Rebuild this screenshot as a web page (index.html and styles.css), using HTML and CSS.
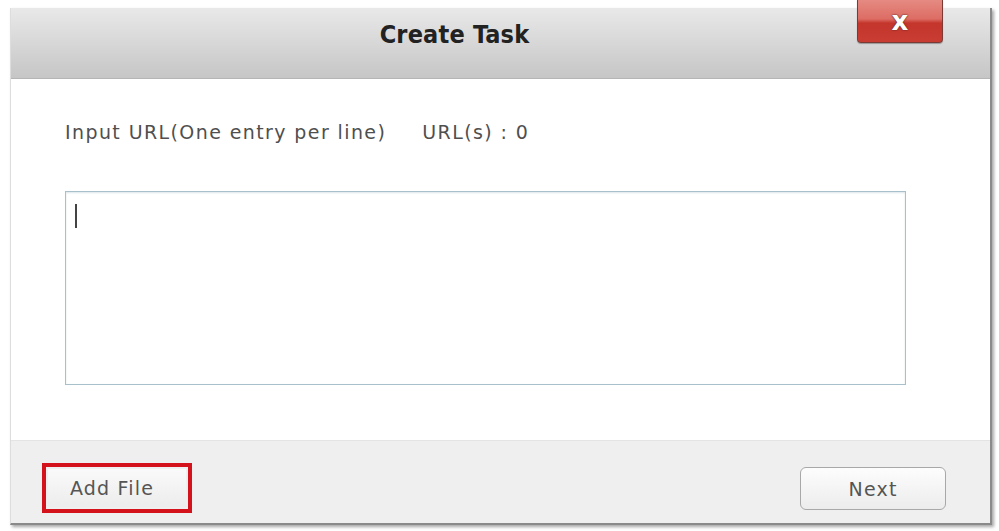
FILE: index.html
```html
<!DOCTYPE html>
<html>
<head>
  <meta charset="UTF-8">
  <title>Create Task</title>
  <link rel="stylesheet" href="styles.css">
</head>
<body>
  <div class="dialog">
    <div class="titlebar">
      <div class="title">Create Task</div>
      <button class="close" title="Close">x</button>
    </div>

    <div class="content">
      <div class="input-label">
        <span>Input URL(One entry per line)</span>
        <span class="count">URL(s) : <span id="urlCount">0</span></span>
      </div>
      <div class="url-box">
        <span class="caret"></span>
      </div>
    </div>

    <div class="footer">
      <div class="highlight">
        <button class="btn add-file">Add File</button>
      </div>
      <button class="btn next">Next</button>
    </div>
  </div>
</body>
</html>
```

FILE: styles.css
```css
body {
  margin: 0;
  background-color: #fff;
  font-family: "DejaVu Sans", Verdana, sans-serif;
  color: #555;
}
.dialog {
  margin: 8px 7px 6px 10px;
  height: 517px;
  display: flex;
  flex-direction: column;
  border-left: 1px solid #ddd;
  border-right: 2px solid #8a8a8a;
  border-bottom: 2px solid #8a8a8a;
  box-shadow: 2px 2px 3px rgba(0,0,0,0.35);
  box-sizing: border-box;
}
.titlebar {
  height: 70px;
  display: flex;
  align-items: flex-start;
  justify-content: center;
  position: relative;
  background: linear-gradient(#e9e9e9, #d4d4d4 60%, #c6c6c6);
  border-bottom: 1px solid #b5b5b5;
}
.title {
  margin-top: 12px;
  margin-left: -92px;
  font-size: 25px;
  font-weight: bold;
  color: #222;
  letter-spacing: 0.2px;
  font-family: "DejaVu Sans Condensed", "DejaVu Sans", sans-serif;
}
.close {
  position: absolute;
  top: -8px;
  right: 47px;
  width: 86px;
  height: 43px;
  padding: 0;
  border: 1px solid #7a3a36;
  border-top: none;
  border-radius: 0 0 4px 4px;
  background: linear-gradient(#e58a82, #dc6d64 45%, #c4352c 55%, #c83d33);
  color: #fff;
  font-size: 26px;
  font-weight: bold;
  line-height: 34px;
  font-family: "DejaVu Sans", sans-serif;
  text-shadow: 0 0 2px #6a2420, 0 0 1px #6a2420;
  box-shadow: 0 1px 1px rgba(0,0,0,0.3);
}
.content {
  flex: 1;
  background-color: #fff;
  padding: 42px 84px 0 54px;
}
.input-label {
  font-size: 19px;
  letter-spacing: 1.4px;
  line-height: 22px;
  color: #4f4f4f;
  display: flex;
  gap: 36px;
}
.url-box {
  margin-top: 48px;
  height: 194px;
  border: 1px solid #a7c0cc;
  box-shadow: inset 0 1px 2px rgba(120,150,170,0.25);
  padding: 12px 9px;
  box-sizing: border-box;
}
.caret {
  display: block;
  width: 2px;
  height: 24px;
  background-color: #444;
}
.footer {
  height: 82px;
  background-color: #efefef;
  border-top: 1px solid #e4e4e4;
  display: flex;
  align-items: flex-start;
  justify-content: space-between;
  padding: 0 44px 0 31px;
}
.highlight {
  border: 4px solid #d3121c;
  padding: 2px;
  margin-top: 22px;
}
.btn {
  font-family: "DejaVu Sans", Verdana, sans-serif;
  font-size: 19px;
  letter-spacing: 1.2px;
  color: #555;
  cursor: pointer;
}
.add-file {
  display: block;
  width: 138px;
  height: 38px;
  border: none;
  background: linear-gradient(#fafafa, #ececec);
  text-align: left;
  padding-left: 22px;
}
.next {
  width: 146px;
  height: 43px;
  margin-top: 26px;
  border: 1px solid #a8a8a8;
  border-radius: 6px;
  background: linear-gradient(#fdfdfd, #ececec);
}
```
